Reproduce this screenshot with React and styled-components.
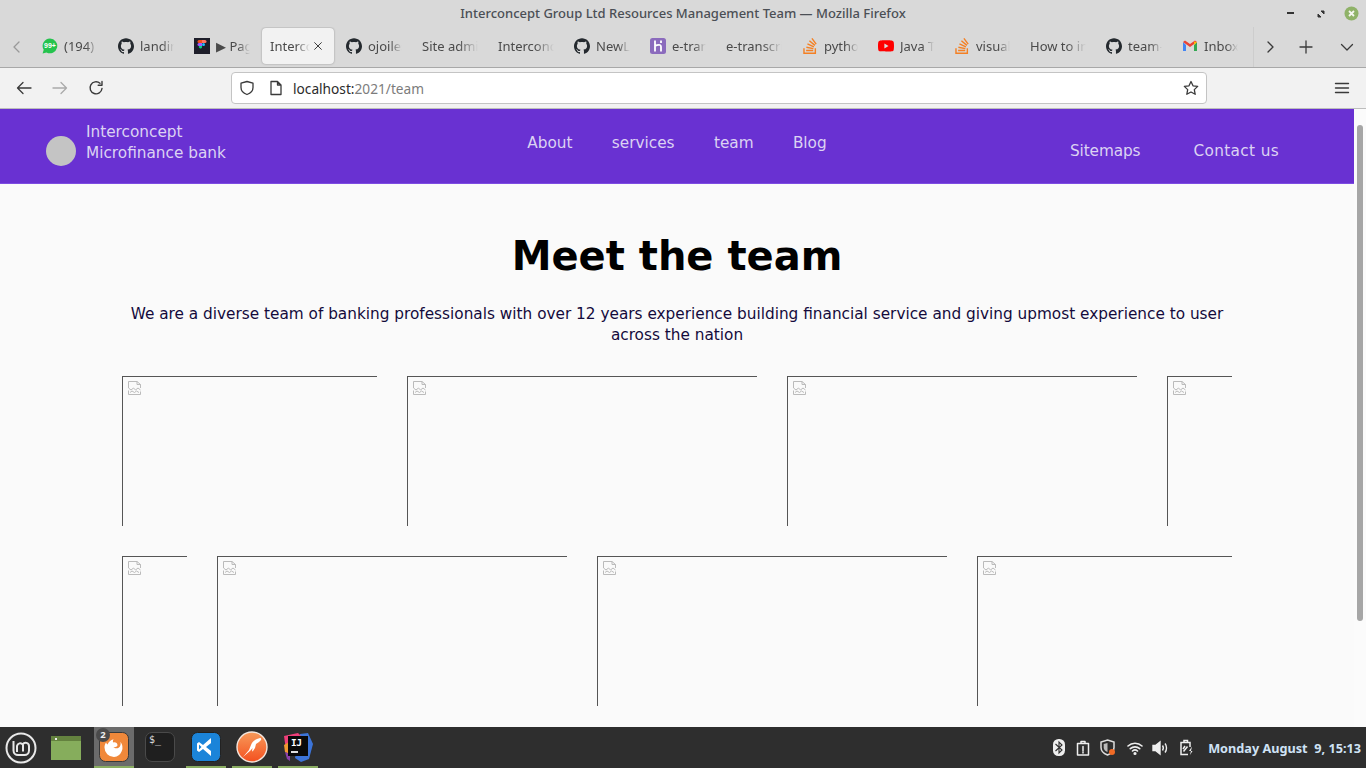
import React from "react";
import styled, { createGlobalStyle } from "styled-components";
import { SiGithub, SiStackoverflow, SiYoutube } from "react-icons/si";

const Global = createGlobalStyle`
  html, body { margin: 0; padding: 0; height: 100%; overflow: hidden; background: #d9d9d9; }
  * { box-sizing: border-box; }
`;
const uiFont = `"Noto Sans", "Open Sans", sans-serif`;
const pageFont = `"DejaVu Sans", sans-serif`;

const Screen = styled.div`
  width: 1366px; height: 768px; display: flex; flex-direction: column; overflow: hidden;
  font-family: ${uiFont};
`;
const TitleBar = styled.div`
  height: 27px; flex: none; background: #d9d9d9; position: relative;
  display: flex; align-items: center; justify-content: flex-end; padding: 0 7px 0 0; gap: 14px;
`;
const Title = styled.div`
  position: absolute; left: 0; right: 0; top: 4px; text-align: center;
  font-size: 13px; line-height: 18px; font-weight: 500; color: #4b4f55;
`;
const WinBtn = styled.button`
  width: 16px; height: 16px; border: 0; padding: 0; background: none; display: flex; align-items: center; justify-content: center;
`;
const TabStrip = styled.div`
  height: 41px; flex: none; background: #d9d9d9; display: flex; align-items: stretch;
  border-bottom: 1px solid #a8a8a8;
`;
const StripBtn = styled.div`
  flex: none; width: ${p => p.$w}px; display: flex; align-items: center; justify-content: center;
`;
const Tabs = styled.div`
  width: 1220px; flex: none; display: flex; overflow: hidden; border-right: 1px solid #cdcdcd;
`;
const Tab = styled.div`
  flex: none; width: 76px; display: flex; align-items: center; padding: 0 12px 2px 8px; gap: 6px; font-size: 13px; color: #4a4a4a;
  white-space: nowrap;
`;
const ActiveTab = styled.div`
  flex: none; width: 72px; margin: 1px 4px 3px 0; background: #f2f2f2; border-radius: 4px;
  box-shadow: 0 0 2px rgba(0,0,0,.35); display: flex; align-items: center; justify-content: space-between;
  padding: 0 10px 0 8px; font-size: 13px; color: #4a4a4a; white-space: nowrap; gap: 2px;
`;
const TabLabel = styled.span`
  flex: 1; min-width: 0; overflow: hidden;
  mask-image: linear-gradient(to right, #000 65%, transparent 100%);
`;
const IconBox = styled.span`
  flex: none; width: 16px; height: 16px; display: flex; align-items: center; justify-content: center; color: ${p => p.$c || "#24292e"};
`;
const NavBar = styled.div`
  height: 41px; flex: none; background: #f2f2f2; display: flex; align-items: center;
  border-bottom: 1px solid #bdbdbd;
`;
const NavIcon = styled.div`
  flex: none; width: 36px; display: flex; justify-content: center; align-items: center; margin-left: ${p => p.$ml || 0}px;
`;
const UrlBar = styled.div`
  flex: none; margin-left: 117px; width: 976px; height: 32px; background: #fff; border: 1px solid #c4c4c4; border-radius: 4px;
  display: flex; align-items: center; padding: 0 7px 0 7px; font-size: 13.7px;
`;
const UrlHost = styled.span` color: #2b2b2b; `;
const UrlPath = styled.span` color: #7c7c7c; flex: 1; `;
const UrlIcon = styled.span` display: flex; width: 16px; margin-right: ${p => p.$mr}px; `;

const Viewport = styled.div` flex: 1; min-height: 0; display: flex; background: #fafafa; `;
const Content = styled.div` flex: 1; min-width: 0; overflow: hidden; font-family: ${pageFont}; `;
const ScrollTrack = styled.div` flex: none; width: 12px; padding: 16px 3px 0; background: #fbfbfb; `;
const ScrollThumb = styled.div` height: 496px; background: #a6a6a6; border-radius: 3px; `;

const Header = styled.header`
  height: 75px; background: #6931d2; border-bottom: 1px solid #7d4ce2; display: grid; grid-template-columns: 1fr auto 1fr;
  color: #dcd3f3; font-size: 15.3px;
`;
const Brand = styled.div` display: flex; padding-left: 46px; gap: 10px; align-items: flex-start; padding-top: 12px; `;
const Logo = styled.div` width: 30px; height: 30px; border-radius: 50%; background: #c4c4c4; margin-top: 15px; `;
const BrandName = styled.div` line-height: 21px; padding-top: 1px; `;
const MainNav = styled.nav` display: flex; gap: 39.3px; padding-top: 24px; line-height: 21px; `;
const SideNav = styled.nav` display: flex; gap: 53px; justify-content: flex-end; padding: 32px 75px 0 0; line-height: 21px; `;
const SideLink = styled.span` letter-spacing: ${p => p.$track || 0}px; `;

const Hero = styled.section` padding-top: 47px; text-align: center; `;
const Heading = styled.h1` margin: 0; font-size: 40px; line-height: 50px; font-weight: 700; color: #000; `;
const Lead = styled.p`
  margin: 23px auto 0; width: 1110px; font-size: 15.3px; line-height: 21px; color: #140a3c;
`;
const Gallery = styled.div` width: 1110px; margin: 30px 0 0 122px; display: flex; flex-direction: column; gap: 30px; `;
const Row = styled.div` display: flex; gap: 30px; overflow: hidden; `;
const Photo = styled.div`
  flex: none; width: ${p => p.$w}px; height: 150px; border-top: 1px solid #555; border-left: 1px solid #555; padding: 3px 0 0 4px;
`;

const Panel = styled.div`
  height: 41px; flex: none; background: #2e2e2e; display: flex; align-items: stretch; color: #fff;
`;
const Launcher = styled.div` width: 42px; flex: none; display: flex; align-items: center; justify-content: center; `;
const FolderSlot = styled.div` width: 48px; flex: none; padding-left: 9px; display: flex; align-items: center; margin-right: 4px; `;
const Tasks = styled.div` display: flex; gap: 6px; `;
const Task = styled.div`
  width: 40px; display: flex; align-items: center; justify-content: center; position: relative;
  background: ${p => (p.$active ? "#6b6b6b" : "transparent")};
  border-bottom: 2px solid ${p => (p.$open ? "#8aad62" : "transparent")};
`;
const Badge = styled.span`
  position: absolute; left: 2px; top: 1px; width: 14px; height: 14px; border-radius: 50%; background: #4a4a4a; color: #eee;
  font: 700 9.5px/14px ${uiFont}; text-align: center;
`;
const Terminal = styled.div`
  width: 30px; height: 30px; border-radius: 7px; background: #1f1f1f; border: 1px solid #4a4a4a; color: #ddd;
  font: 400 10px/11px "DejaVu Sans Mono", monospace; padding: 1px 0 0 3px;
`;
const IdeTile = styled.div`
  position: relative; width: 32px; height: 32px;
`;
const IdeSquare = styled.div`
  position: absolute; left: 6px; top: 5px; width: 20px; height: 20px; background: #0a0a0a; color: #fff;
  font: 700 9.5px/12px "DejaVu Sans Mono", monospace; padding: 1px 0 0 3px; letter-spacing: -.5px;
`;
const IdeDash = styled.span`
  position: absolute; left: 3px; bottom: 3px; width: 7px; height: 1.5px; background: #ddd;
`;
const Tray = styled.div`
  margin-left: auto; display: flex; align-items: center; padding-right: 5px;
`;
const TrayIcon = styled.span` display: flex; justify-content: center; width: ${p => p.$w}px; `;
const Clock = styled.span`
  margin-left: 7px; font-size: 12.7px; font-weight: 700; color: #cfe2f5; white-space: pre;
`;

const Stroke = ({ size = 16, children, sw = 1.3, color = "#3a3a3a" }) => (
  <svg width={size} height={size} viewBox="0 0 16 16" fill="none" stroke={color} strokeWidth={sw} strokeLinecap="round" strokeLinejoin="round">{children}</svg>
);

const Whatsapp = () => (
  <svg width="16" height="16" viewBox="0 0 16 16"><path d="M8 .5a7.4 7.4 0 0 0-6.300 11.200L.6 15.500l3.900-1A7.400 7.400 0 1 0 8 .5z" fill="#25c34e"/><text x="8" y="10.400" textAnchor="middle" fontSize="7" fontWeight="700" fill="#fff" fontFamily="Liberation Sans">99+</text></svg>
);
const Figma = () => (
  <svg width="16" height="16" viewBox="0 0 16 16"><rect width="16" height="16" fill="#1e1e2a"/><path d="M5 2h3v3H5a1.500 1.500 0 0 1 0-3z" fill="#f24e1e"/><path d="M8 2h3a1.500 1.500 0 0 1 0 3H8z" fill="#ff7262"/><path d="M5 5h3v3H5a1.500 1.500 0 0 1 0-3z" fill="#a259ff"/><circle cx="9.500" cy="6.500" r="1.500" fill="#1abcfe"/><path d="M5 8h3v1.500A1.500 1.500 0 1 1 5 8z" fill="#0acf83"/></svg>
);
const Heroku = () => (
  <svg width="16" height="16" viewBox="0 0 16 16"><rect width="16" height="16" rx="2.500" fill="#8b6bbd"/><path d="M5 2.500v11M5 8c2-1.200 3.500-1.500 5-1 .8.300 1 1 1 1.800v4.700M11 2.500v2.500" stroke="#fff" strokeWidth="1.800" fill="none"/></svg>
);
const Gmail = () => (
  <svg width="16" height="16" viewBox="0 0 16 16"><path d="M1 4v9h3V7z" fill="#4285f4"/><path d="M12 7v6h3V4z" fill="#34a853"/><path d="M1 4l7 5 7-5-2-1.500-5 3.600L3 2.500z" fill="#ea4335"/><path d="M12 3.500l3 .5-3 3z" fill="#fbbc04"/></svg>
);
const Broken = () => (
  <svg width="16" height="16" viewBox="0 0 16 16" fill="none" stroke="#bbb" strokeWidth="1" style={{ display: "block" }}>
    <path d="M1.500 8V1.500h8.500l3.500 3V8M10 1.500v3h3.500" />
    <path d="M1.500 8l2.500 2 2.500-2 2 2 2.500-2 2.500 2" />
    <path d="M1.500 10.500v4h12v-3M3 12.500l2-1.500 2.500 1.500 2-1.500 2.500 1.500" />
  </svg>
);

const tabs = [
  { icon: <Whatsapp />, label: "(194) WhatsApp" },
  { icon: <SiGithub size={16} />, label: "landing-page" },
  { icon: <Figma />, label: "▶ Page" },
  { active: true, label: "Interconcept" },
  { icon: <SiGithub size={16} />, label: "ojoilesanmi" },
  { label: "Site administration" },
  { label: "Interconcept Group" },
  { icon: <SiGithub size={16} />, label: "NewLife" },
  { icon: <Heroku />, label: "e-transcript" },
  { label: "e-transcript app" },
  { icon: <IconBox $c="#f48024"><SiStackoverflow size={16} /></IconBox>, label: "python" },
  { icon: <SiYoutube size={16} color="#f00" />, label: "Java Tutorial" },
  { icon: <IconBox $c="#f48024"><SiStackoverflow size={16} /></IconBox>, label: "visual" },
  { label: "How to install" },
  { icon: <SiGithub size={16} />, label: "team-page" },
  { icon: <Gmail />, label: "Inbox (12)" },
];
const rows = [[255, 350, 350, 350], [65, 350, 350, 350]];

export default function App() {
  return (
    <Screen>
      <Global />
      <TitleBar>
        <Title>Interconcept Group Ltd Resources Management Team — Mozilla Firefox</Title>
        <WinBtn><svg width="8" height="3"><rect width="7" height="2" y="0" fill="#333" /></svg></WinBtn>
        <WinBtn><svg width="8" height="8" viewBox="0 0 8 8"><path d="M4 1h3v3zM4 7H1V4z" fill="#333" stroke="#333" /></svg></WinBtn>
        <WinBtn><svg width="15" height="15" viewBox="0 0 15 15"><circle cx="7.500" cy="7.500" r="7" fill="#8fb268" /><path d="M5 5l5 5M10 5l-5 5" stroke="#f4f6ef" strokeWidth="1.800" /></svg></WinBtn>
      </TitleBar>
      <TabStrip>
        <StripBtn $w={34}><Stroke color="#999"><path d="M10 3L5 8l5 5" /></Stroke></StripBtn>
        <Tabs>
          {tabs.map(t =>
            t.active ? (
              <ActiveTab key={t.label}>
                <TabLabel>{t.label}</TabLabel>
                <Stroke size={12}><path d="M3.500 3.500l9 9M12.500 3.500l-9 9" /></Stroke>
              </ActiveTab>
            ) : (
              <Tab key={t.label}>
                {t.icon && <IconBox>{t.icon}</IconBox>}
                <TabLabel>{t.label}</TabLabel>
              </Tab>
            )
          )}
        </Tabs>
        <StripBtn $w={31}><Stroke><path d="M6 3l5 5-5 5" /></Stroke></StripBtn>
        <StripBtn $w={42}><Stroke><path d="M8 2v12M2 8h12" /></Stroke></StripBtn>
        <StripBtn $w={39}><Stroke><path d="M2.500 5.500L8 11l5.500-5.500" /></Stroke></StripBtn>
      </TabStrip>
      <NavBar>
        <NavIcon $ml={6}><Stroke><path d="M15 8H1.500M7 2.500L1.500 8 7 13.500" /></Stroke></NavIcon>
        <NavIcon><Stroke color="#aaa"><path d="M1 8h13.500M9 2.500L14.500 8 9 13.500" /></Stroke></NavIcon>
        <NavIcon><Stroke sw={1.400}><path d="M14 8.500A6 6 0 1 1 12 3.300M14 1.500v3.800h-3.800" /></Stroke></NavIcon>
        <UrlBar>
          <UrlIcon $mr={13}><Stroke><path d="M8 1.500l6 1.700v4.300c0 3.500-2.500 5.800-6 7-3.500-1.200-6-3.500-6-7V3.200z" /></Stroke></UrlIcon>
          <UrlIcon $mr={9}><Stroke><path d="M3 1.500h6.500L13 5v9.500H3zM9.500 1.500V5H13" /></Stroke></UrlIcon>
          <UrlHost>localhost:</UrlHost><UrlPath>2021/team</UrlPath>
          <UrlIcon $mr={0}><Stroke><path d="M8 1.500l2 4.300 4.700.6-3.400 3.200.9 4.700L8 12l-4.200 2.300.9-4.700L1.300 6.400 6 5.800z" /></Stroke></UrlIcon>
        </UrlBar>
        <NavIcon $ml={117}><Stroke sw={1.400}><path d="M1.500 3.500h13M1.500 8h13M1.500 12.500h13" /></Stroke></NavIcon>
      </NavBar>
      <Viewport>
        <Content>
          <Header>
            <Brand>
              <Logo />
              <BrandName>Interconcept<br />Microfinance bank</BrandName>
            </Brand>
            <MainNav>
              <span>About</span><span>services</span><span>team</span><span>Blog</span>
            </MainNav>
            <SideNav>
              <SideLink $track={-0.1}>Sitemaps</SideLink><SideLink $track={0.35}>Contact us</SideLink>
            </SideNav>
          </Header>
          <Hero>
            <Heading>Meet the team</Heading>
            <Lead>We are a diverse team of banking professionals with over 12 years experience building financial service and giving upmost experience to user across the nation</Lead>
          </Hero>
          <Gallery>
            {rows.map((r, i) => (
              <Row key={i}>
                {r.map((w, j) => <Photo key={j} $w={w}><Broken /></Photo>)}
              </Row>
            ))}
          </Gallery>
        </Content>
        <ScrollTrack><ScrollThumb /></ScrollTrack>
      </Viewport>
      <Panel>
        <Launcher>
          <svg width="32" height="32" viewBox="0 0 32 32" fill="none" stroke="#e8e8e8" strokeWidth="2">
            <circle cx="16" cy="16" r="14.500" />
            <path d="M8.500 9v9.500a4.500 4.500 0 0 0 4.500 4.500h6.500a4.500 4.500 0 0 0 4.500-4.500V14a3.300 3.300 0 0 0-6.200-1.500A3.300 3.300 0 0 0 12 14v6M18 13v6.500" />
          </svg>
        </Launcher>
        <FolderSlot>
          <svg width="30" height="24" viewBox="0 0 30 24"><rect width="30" height="24" fill="#86ad5c" /><rect width="30" height="5" fill="#64823f" /><rect x="4" y="2" width="2" height="2" fill="#eee" /></svg>
        </FolderSlot>
        <Tasks>
          <Task $active $open>
            <svg width="30" height="30" viewBox="0 0 30 30"><rect width="29" height="29" x=".5" y=".5" rx="6" fill="#f0883a" stroke="#3a3a3a" /><path d="M15 25a9.500 9.500 0 0 1-9.500-9.500c0-2 .6-3.700 1.600-5 .3 1 .8 1.600 1.500 2 .8-2.600 3-4.500 6-5.300-.8 1.300-.9 2.400-.4 3.300 2.400-.6 4.300.6 4.300 2.700 0 1.500-2.400 2-4 2 1 1.200 3.500 1.700 5.500.2 1.500-1.100 2-3.200 1.400-5.700A9.500 9.500 0 0 1 15 25z" fill="#fff" /></svg>
            <Badge>2</Badge>
          </Task>
          <Task><Terminal>$_</Terminal></Task>
          <Task $open>
            <svg width="30" height="30" viewBox="0 0 30 30"><rect width="29" height="29" x=".5" y=".5" rx="6" fill="#1b84d9" stroke="#222" /><path d="M20 6v18l-8-7-4 3-2-1.500V11.500L8 10l4 3zm0 5l-5 4 5 4zM8 12.500v5l2.500-2.500z" fill="#fff" fillRule="evenodd" /></svg>
          </Task>
          <Task $open>
            <svg width="32" height="32" viewBox="0 0 32 32">
              <defs><linearGradient id="pm" x1="0" y1="0" x2="0" y2="1"><stop offset="0" stopColor="#f79a5a" /><stop offset="1" stopColor="#f4501f" /></linearGradient></defs>
              <circle cx="16" cy="16" r="15" fill="url(#pm)" stroke="#f3e6de" strokeWidth="1.400" />
              <path d="M7 26l6-7 2-5c1-3 3-5 6-6l3-1c1 0 1.500 1 1 2l-2 2-3 2-1 4-2 3-1 .5.500-3.500-2 2.500z" fill="#fff" />
            </svg>
          </Task>
          <Task $open>
            <IdeTile>
              <svg width="32" height="32" viewBox="0 0 32 32" style={{ position: "absolute" }}><path d="M18 3l8-1 5 11-4 15-8 3-6-4z" fill="#3c74d8" /><path d="M2 5l14-3 4 4-8 10-8 3z" fill="#ef3f7a" /><path d="M2 14l5-3v12l-4-2z" fill="#f09a30" /><path d="M3 21l5 2v7l-3-2z" fill="#8a3fa8" /></svg>
              <IdeSquare>IJ<IdeDash /></IdeSquare>
            </IdeTile>
          </Task>
        </Tasks>
        <Tray>
          <TrayIcon $w={24}>
            <svg width="12" height="17" viewBox="0 0 12 17"><rect width="12" height="17" rx="5.500" fill="#eee" /><path d="M2.500 5l6.500 6-3 3V3l3 3-6.500 6" fill="none" stroke="#2e2e2e" strokeWidth="1.100" /></svg>
          </TrayIcon>
          <TrayIcon $w={24}><Stroke color="#eee" sw={1.500}><path d="M2.500 3.500h11v11.500h-11zM6 3.500V1.500h4v2M8 6.500v4.500M8 12v1" /></Stroke></TrayIcon>
          <TrayIcon $w={25}>
            <svg width="17" height="17" viewBox="0 0 17 17"><path d="M8.500 1l6.500 2v5.500c0 3.500-2.700 6-6.500 7.500-3.800-1.500-6.500-4-6.500-7.500V3z" fill="none" stroke="#ddd" strokeWidth="1.500" /><path d="M8.500 4v9c-2.300-1-3.800-2.300-3.800-4.800V5z" fill="#bbb" /><circle cx="13" cy="13" r="3" fill="#f06a25" /></svg>
          </TrayIcon>
          <TrayIcon $w={29}><Stroke color="#eee" sw={1.600}><path d="M1 6a10.200 10.200 0 0 1 14 0M3.300 8.700a7 7 0 0 1 9.400 0M5.500 11a3.600 3.600 0 0 1 5 0" /><circle cx="8" cy="13.500" r=".8" fill="#eee" /></Stroke></TrayIcon>
          <TrayIcon $w={22}>
            <svg width="17" height="16" viewBox="0 0 17 16" fill="none" stroke="#eee" strokeWidth="1.400"><path d="M1 5.500h2.500L8 2v12l-4.500-3.500H1z" fill="#eee" /><path d="M10.500 5.500c1 1.500 1 3.500 0 5M13 3.500c2 2.500 2 6.500 0 9" /></svg>
          </TrayIcon>
          <TrayIcon $w={30}>
            <svg width="17" height="17" viewBox="0 0 17 17" fill="none" stroke="#eee" strokeWidth="1.500"><path d="M12 8V3.500H3V15.500h7M6 3.500V1.500h3.500v2" /><path d="M5 10l2-3M5.500 12.500l4-5" /><path d="M14 7.500l-3 4.500h3.500L12 16z" fill="#eee" stroke="none" /></svg>
          </TrayIcon>
          <Clock>Monday August  9, 15:13</Clock>
        </Tray>
      </Panel>
    </Screen>
  );
}
